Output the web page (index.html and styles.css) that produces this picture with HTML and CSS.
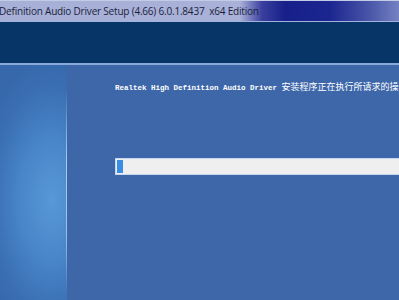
FILE: index.html
```html
<!DOCTYPE html>
<html lang="zh">
<head>
  <meta charset="UTF-8">
  <title>Realtek High Definition Audio Driver Setup</title>
  <link rel="stylesheet" href="styles.css">
</head>
<body>
<div class="window">
  <div class="titlebar">
    <span class="title">Definition Audio Driver Setup (4.66) 6.0.1.8437&nbsp; x64 Edition</span>
  </div>
  <div class="header"></div>
  <div class="main">
    <div class="side"></div>
    <div class="content">
      <p class="status"><span class="latin">Realtek High Definition Audio Driver </span><span class="cjk">安装程序正在执行所请求的操作...</span></p>
      <div class="progress"><div class="chunk"></div></div>
    </div>
  </div>
</div>
</body>
</html>
```
FILE: styles.css
```css
body {
  margin: 0;
  overflow: hidden;
  background-color: #3e67aa;
}

.window {
  width: 399px;
  height: 300px;
  display: flex;
  flex-direction: column;
  overflow: hidden;
}

.titlebar {
  height: 20px;
  flex: none;
  border-top: 1px solid #c4cbe6;
  border-bottom: 1px solid #9fb3dc;
  background: linear-gradient(to right, #a7b0d6 0px, #a9b1d8 240px, #3a3f9e 262px, #17208a 285px, #1c2690 330px, #4a56a8 370px, #7482c2 399px);
  display: flex;
  align-items: center;
  white-space: nowrap;
}

.title {
  font-family: "Open Sans", sans-serif;
  font-size: 10px;
  color: #1b1f3c;
  margin-left: -1px;
  letter-spacing: -0.2px;
}

.header {
  height: 41px;
  flex: none;
  background-color: #083568;
  border-bottom: 2px solid #8aa8da;
}

.main {
  flex: 1;
  display: flex;
}

.side {
  width: 67px;
  flex: none;
  position: relative;
  background: radial-gradient(ellipse 75px 140px at 52px 135px, #5898d7 0%, #4884c8 45%, #3a6fb3 80%, #3768ac 100%);
}

.side::after {
  content: "";
  position: absolute;
  right: 0;
  top: 25px;
  bottom: 8px;
  width: 1px;
  background: linear-gradient(to bottom, rgba(150, 190, 235, 0), #a8ccf2 35%, #9cc2ec 70%, rgba(150, 190, 235, 0));
}

.content {
  flex: 1;
  padding: 14px 0 0 48px;
  overflow: hidden;
  white-space: nowrap;
}

.status {
  margin: 0;
  height: 12px;
  line-height: 12px;
  color: #ffffff;
}

.latin {
  font-family: "Liberation Mono", monospace;
  font-size: 7.5px;
  font-weight: bold;
}

.cjk {
  font-family: "Noto Sans CJK SC", sans-serif;
  font-size: 9px;
}

.progress {
  margin-top: 67px;
  height: 13px;
  width: 320px;
  border: 1px solid #c6d6f0;
  background-color: #efefef;
  display: flex;
  padding: 1px;
}

.chunk {
  width: 6px;
  background-color: #3a8de2;
}
```
